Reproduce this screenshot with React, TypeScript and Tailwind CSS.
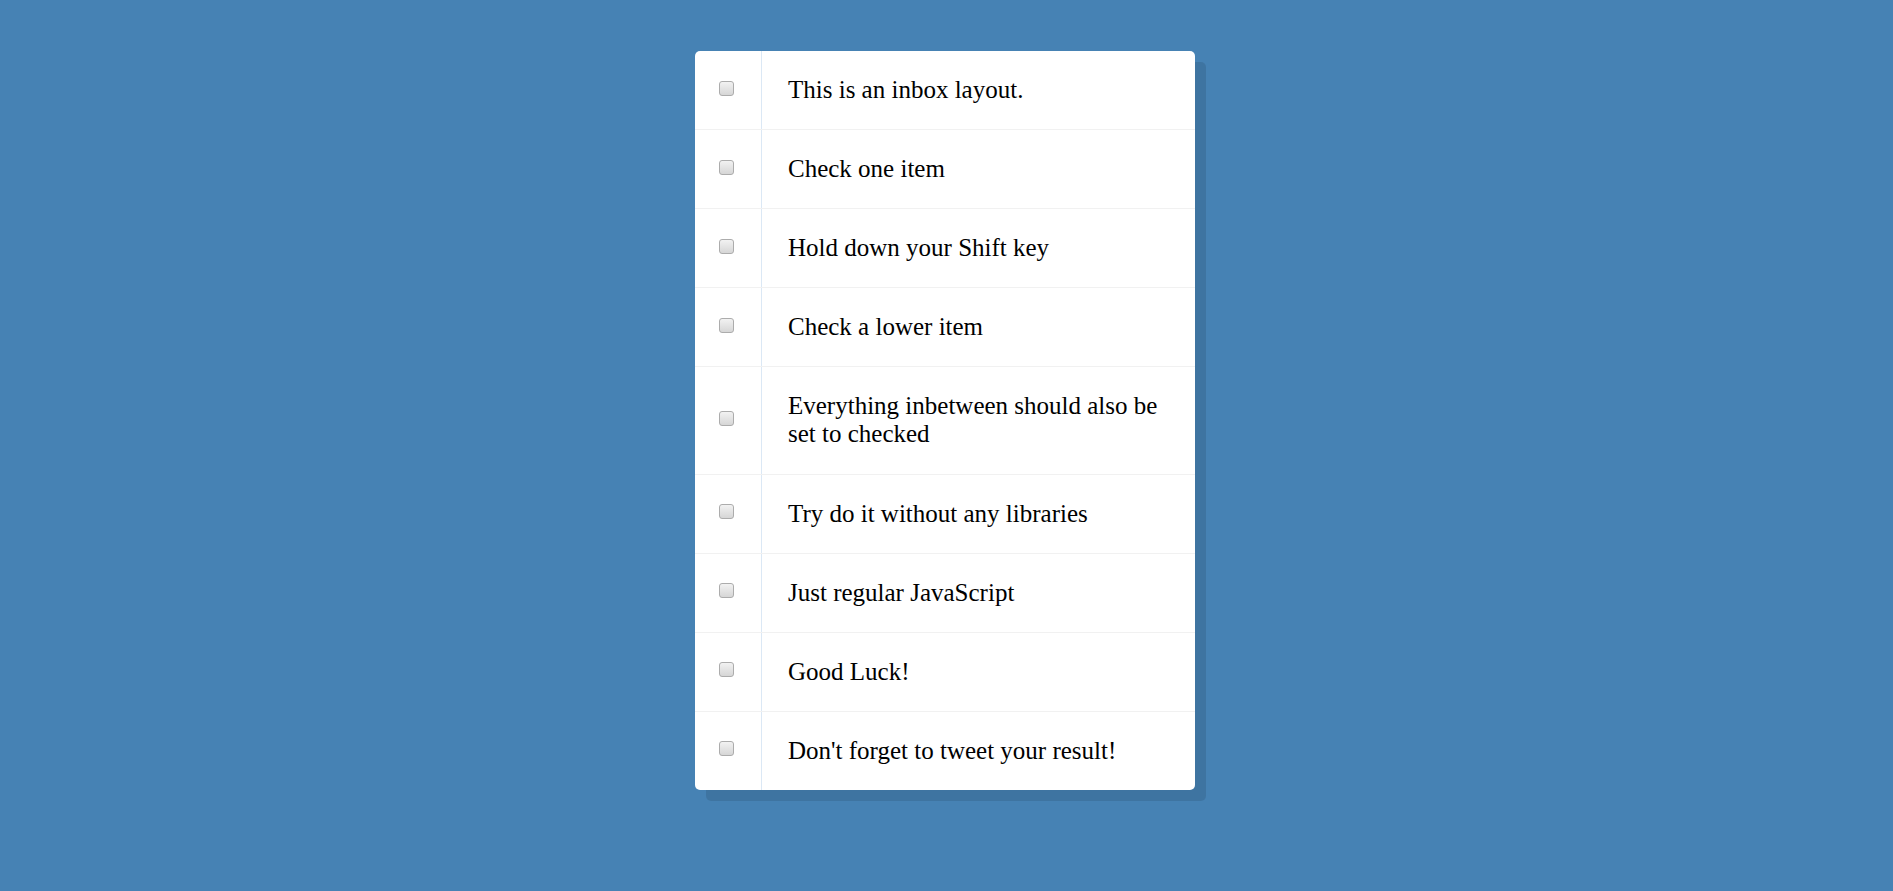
import React, { useRef, useState } from 'react';

const items = [
  'This is an inbox layout.',
  'Check one item',
  'Hold down your Shift key',
  'Check a lower item',
  'Everything inbetween should also be set to checked',
  'Try do it without any libraries',
  'Just regular JavaScript',
  'Good Luck!',
  "Don't forget to tweet your result!",
];

export default function App() {
  const [checked, setChecked] = useState<boolean[]>(items.map(() => false));
  const lastChecked = useRef<number | null>(null);

  const handleClick = (index: number, shift: boolean) => {
    const next = [...checked];
    const value = !next[index];
    next[index] = value;
    if (shift && value && lastChecked.current !== null) {
      const from = Math.min(lastChecked.current, index);
      const to = Math.max(lastChecked.current, index);
      for (let i = from; i <= to; i++) next[i] = true;
    }
    lastChecked.current = index;
    setChecked(next);
  };

  return (
    <div className="min-h-screen bg-[#4682b4] pt-[51px] pr-[3px] pb-10">
      <div className="mx-auto w-[500px] rounded-[5px] bg-white shadow-[11px_11px_0_rgba(0,0,0,0.1)]">
        {items.map((text, i) => (
          <div
            key={i}
            className="flex items-center border-b border-[#f1f1f1] last:border-b-0"
          >
            <input
              type="checkbox"
              checked={checked[i]}
              onChange={() => {}}
              onClick={(e) => handleClick(i, e.shiftKey)}
              className="ml-[24px] mr-[27px] mt-[-4px] h-[15px] w-[15px] shrink-0 appearance-none rounded-[3px] border border-[#acacac] bg-gradient-to-b from-[#f2f2f2] to-[#d6d6d6] checked:bg-[#8aa9d6]"
            />
            <p
              className={`flex-1 border-l border-[#dbe8f5] py-[25px] pl-[26px] pr-[25px] font-['Liberation_Serif',serif] text-[25px] leading-[28.1px] text-black ${
                checked[i] ? 'bg-[#f9f9f9] line-through' : ''
              }`}
            >
              {text}
            </p>
          </div>
        ))}
      </div>
    </div>
  );
}
